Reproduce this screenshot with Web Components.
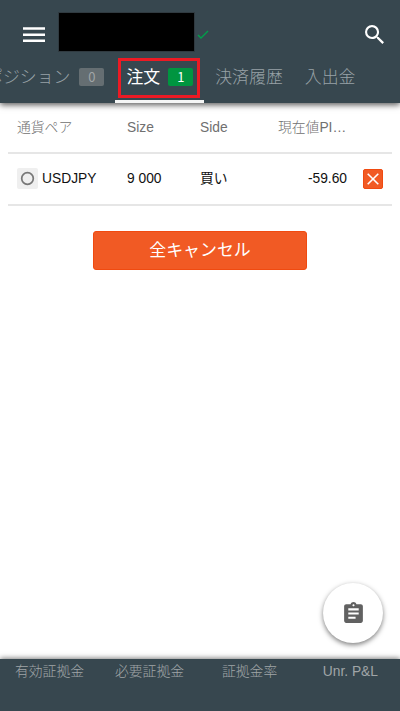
<!DOCTYPE html>
<html lang="ja">
<head>
<meta charset="utf-8">
<title>注文</title>
<style>
html,body{margin:0;height:100%;overflow:hidden;background:#fff}
body{font-family:"Liberation Sans","Noto Sans CJK JP",sans-serif;font-size:13.8px;color:#212121}
</style>
</head>
<body>
<trade-app></trade-app>
<script>
const define = (name, html) => customElements.define(name, class extends HTMLElement {
  constructor() {
    super();
    this.attachShadow({mode: "open"}).innerHTML = html;
  }
});

define("count-badge", `<style>
:host{display:block;box-sizing:border-box;width:25px;height:18px;margin-top:3px;border-radius:2px;background:#656e72;color:#a0a5a7;
font:400 13px/18px "Noto Sans CJK JP",sans-serif;text-align:center}
:host([active]){background:#009540;color:#fff}
</style><slot></slot>`);

define("app-tab", `<style>
:host{display:flex;box-sizing:border-box;flex:none;height:49px;padding:0 11px 3px;align-items:center;gap:9px;
font:300 16.9px/24px "Noto Sans CJK JP",sans-serif;color:#98a2a7;white-space:nowrap;border-bottom:3px solid transparent}
:host([active]){color:#fff;font-weight:400;gap:8px;border-bottom-color:#f4f5f5;position:relative}
:host([active])::after{content:"";position:absolute;left:3px;top:4px;width:76px;height:34px;border:3px solid #ec1a24}
</style><slot></slot>`);

define("app-header", `<style>
:host{display:flex;flex-direction:column;height:103px;background:#37474f;box-shadow:0 2px 6px rgba(0,0,0,.65);position:relative;overflow:visible}
.bar{display:flex;height:54px;box-sizing:border-box;padding:13px 16px 0 23px}
.menu{margin:14px 14px 0 0;width:22px;height:16px}
.name{width:135px;height:38px;background:#000;outline:1px solid #303a40}
.check{margin:17px 0 0 3px;width:12px;height:9px}
.search{margin:12px 0 0 auto;width:19px;height:19px}
svg{display:block;flex:none}
.tabs{display:flex;height:49px;overflow:hidden}
.track{display:flex;margin-left:-25px}
</style>
<div class="bar">
<svg class="menu" viewBox="0 0 22 16"><path d="M0 1.5h22M0 7.7h22M0 13.8h22" stroke="#fff" stroke-width="2.5"/></svg>
<div class="name"></div>
<svg class="check" viewBox="0 0 12 9"><path d="M1 5l3 3 7-7" fill="none" stroke="#00a04a" stroke-width="1.4"/></svg>
<svg class="search" viewBox="3 3 17.5 17.5"><path fill="#fff" d="M15.5 14h-.79l-.28-.27A6.471 6.471 0 0 0 16 9.5 6.5 6.5 0 1 0 9.5 16c1.61 0 3.09-.59 4.23-1.57l.27.28v.79l5 4.99L20.49 19l-4.99-5zm-6 0C7.01 14 5 11.99 5 9.5S7.01 5 9.5 5 14 7.01 14 9.5 11.99 14 9.5 14z"/></svg>
</div>
<div class="tabs"><div class="track"><slot></slot></div></div>`);

define("order-row", `<style>
:host{display:grid;grid-template-columns:110px 73px 78px 69px 1fr;align-items:center;box-sizing:border-box;
height:52px;margin:0 8px;padding-left:9px;border-bottom:2px solid #e6e6e6;line-height:20px;white-space:nowrap;color:#111}
:host([head]){height:51px;color:#707070;font-weight:300}
::slotted([slot=value]){text-align:right}
:host([head]) ::slotted([slot=value]){text-align:left}
::slotted([slot=pair]){display:flex;align-items:center}
::slotted([slot=action]){justify-self:end;margin-right:9px}
</style><slot name="pair"></slot><slot name="size"></slot><slot name="side"></slot><slot name="value"></slot><slot name="action"></slot>`);

define("pair-marker", `<style>
:host{display:flex;width:21px;height:21px;margin:0 4px 2px 0;border-radius:2px;background:#efefef;align-items:center;justify-content:center}
svg{display:block}
</style><svg width="15" height="15" viewBox="0 0 15 15"><circle cx="7.5" cy="7.5" r="5.8" fill="none" stroke="#777" stroke-width="1.7"/></svg>`);

define("close-button", `<style>
:host{display:block;box-sizing:border-box;width:20px;height:20px;border-radius:2px;background:#f15a24;border:1px solid #f04a10}
svg{display:block}
</style><svg width="18" height="18" viewBox="0 0 18 18"><path d="M3.7 3.7l10.6 10.6M14.3 3.7L3.7 14.3" stroke="#fff" stroke-width="1.6"/></svg>`);

define("cancel-button", `<style>
:host{display:block;box-sizing:border-box;width:214px;height:39px;margin:25px auto 0 93px;border:1px solid #f04a10;border-radius:3px;
background:#f15a24;color:#fff;font:400 16.9px/34px "Noto Sans CJK JP",sans-serif;text-align:center}
</style><slot></slot>`);

define("clipboard-fab", `<style>
:host{position:absolute;right:17px;top:583px;width:60px;height:60px;border-radius:50%;background:#fff;
box-shadow:0 2px 5px rgba(0,0,0,.5);display:flex;align-items:center;justify-content:center}
</style><svg width="25" height="25" viewBox="0 0 24 24"><path fill="#616161" d="M19 3h-4.18C14.4 1.84 13.3 1 12 1c-1.3 0-2.4.84-2.82 2H5c-1.1 0-2 .9-2 2v14c0 1.1.9 2 2 2h14c1.1 0 2-.9 2-2V5c0-1.1-.9-2-2-2zm-7 0c.55 0 1 .45 1 1s-.45 1-1 1-1-.45-1-1 .45-1 1-1zm2 14H7v-2h7v2zm3-4H7v-2h10v2zm0-4H7V7h10v2z"/></svg>`);

define("account-footer", `<style>
:host{display:flex;box-sizing:border-box;height:52px;margin-top:auto;padding:3px 22px 0 15px;background:#37474f;color:#a0a5a7;
line-height:20px;font-weight:300;box-shadow:0 -1px 5px rgba(0,0,0,.5);white-space:nowrap}
::slotted(:nth-child(1)),::slotted(:nth-child(2)){width:100px}
::slotted(:nth-child(3)){margin-left:7px}
::slotted(:last-child){margin-left:auto}
</style><slot></slot>`);

define("trade-app", `<style>
:host{display:flex;flex-direction:column;position:relative;width:400px;height:711px;overflow:hidden}
</style>
<app-header>
<app-tab>ポジション<count-badge>0</count-badge></app-tab>
<app-tab active>注文<count-badge active>1</count-badge></app-tab>
<app-tab>決済履歴</app-tab>
<app-tab>入出金</app-tab>
</app-header>
<order-row head><span slot="pair">通貨ペア</span><span slot="size">Size</span><span slot="side">Side</span><span slot="value">現在値PI…</span></order-row>
<order-row><span slot="pair"><pair-marker></pair-marker>USDJPY</span><span slot="size">9 000</span><span slot="side">買い</span><span slot="value">-59.60</span><close-button slot="action"></close-button></order-row>
<cancel-button>全キャンセル</cancel-button>
<clipboard-fab></clipboard-fab>
<account-footer><span>有効証拠金</span><span>必要証拠金</span><span>証拠金率</span><span>Unr. P&amp;L</span></account-footer>`);
</script>
</body>
</html>
